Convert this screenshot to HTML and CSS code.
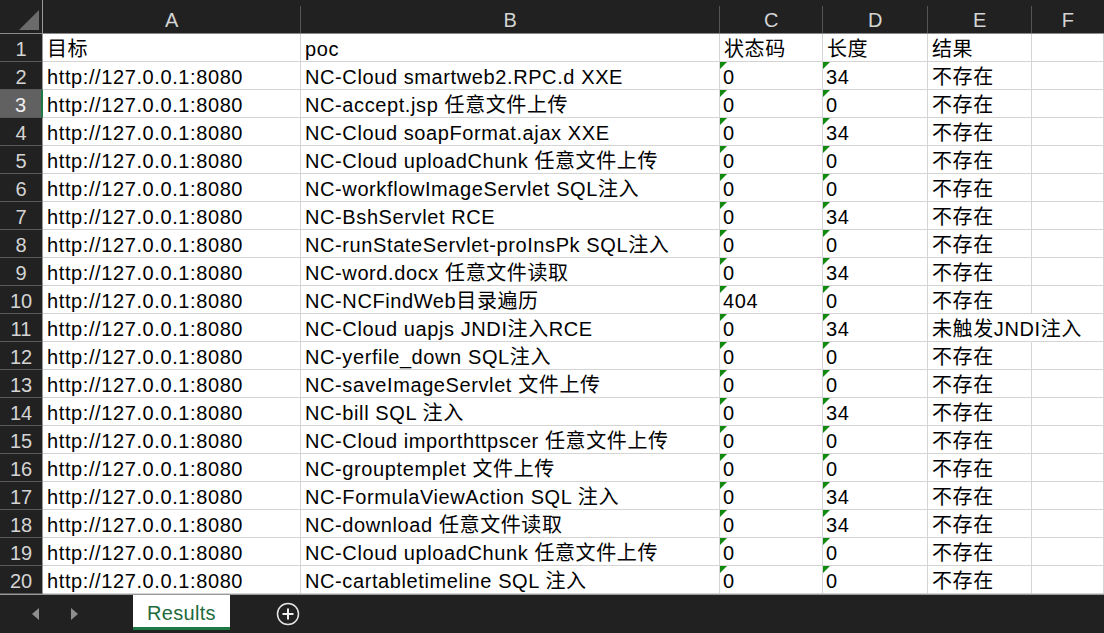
FILE: index.html
```html
<!DOCTYPE html>
<html lang="zh-CN">
<head>
<meta charset="utf-8">
<title>Results</title>
<link rel="stylesheet" href="styles.css">
</head>
<body>
<div class="app">
  <div class="sheet">
    <div class="corner"><svg class="corner-tri" width="20" height="20" viewBox="0 0 20 20"><polygon points="20,0 20,20 0,20" fill="#6b6b6b"/></svg></div>
    <div class="colh">A</div><div class="colh">B</div><div class="colh">C</div><div class="colh">D</div><div class="colh">E</div><div class="colh last">F</div>

    <div class="rowh">1</div><div class="c">目标</div><div class="c">poc</div><div class="c">状态码</div><div class="c">长度</div><div class="c">结果</div><div class="c"></div>
    <div class="rowh">2</div><div class="c">http://127.0.0.1:8080</div><div class="c">NC-Cloud smartweb2.RPC.d XXE</div><div class="c n">0</div><div class="c n">34</div><div class="c">不存在</div><div class="c"></div>
    <div class="rowh active">3</div><div class="c cur">http://127.0.0.1:8080</div><div class="c">NC-accept.jsp 任意文件上传</div><div class="c n">0</div><div class="c n">0</div><div class="c">不存在</div><div class="c"></div>
    <div class="rowh">4</div><div class="c">http://127.0.0.1:8080</div><div class="c">NC-Cloud soapFormat.ajax XXE</div><div class="c n">0</div><div class="c n">34</div><div class="c">不存在</div><div class="c"></div>
    <div class="rowh">5</div><div class="c">http://127.0.0.1:8080</div><div class="c">NC-Cloud uploadChunk 任意文件上传</div><div class="c n">0</div><div class="c n">0</div><div class="c">不存在</div><div class="c"></div>
    <div class="rowh">6</div><div class="c">http://127.0.0.1:8080</div><div class="c">NC-workflowImageServlet SQL注入</div><div class="c n">0</div><div class="c n">0</div><div class="c">不存在</div><div class="c"></div>
    <div class="rowh">7</div><div class="c">http://127.0.0.1:8080</div><div class="c">NC-BshServlet RCE</div><div class="c n">0</div><div class="c n">34</div><div class="c">不存在</div><div class="c"></div>
    <div class="rowh">8</div><div class="c">http://127.0.0.1:8080</div><div class="c">NC-runStateServlet-proInsPk SQL注入</div><div class="c n">0</div><div class="c n">0</div><div class="c">不存在</div><div class="c"></div>
    <div class="rowh">9</div><div class="c">http://127.0.0.1:8080</div><div class="c">NC-word.docx 任意文件读取</div><div class="c n">0</div><div class="c n">34</div><div class="c">不存在</div><div class="c"></div>
    <div class="rowh">10</div><div class="c">http://127.0.0.1:8080</div><div class="c">NC-NCFindWeb目录遍历</div><div class="c n">404</div><div class="c n">0</div><div class="c">不存在</div><div class="c"></div>
    <div class="rowh">11</div><div class="c">http://127.0.0.1:8080</div><div class="c">NC-Cloud uapjs JNDI注入RCE</div><div class="c n">0</div><div class="c n">34</div><div class="c spill">未触发JNDI注入</div><div class="c"></div>
    <div class="rowh">12</div><div class="c">http://127.0.0.1:8080</div><div class="c">NC-yerfile_down SQL注入</div><div class="c n">0</div><div class="c n">0</div><div class="c">不存在</div><div class="c"></div>
    <div class="rowh">13</div><div class="c">http://127.0.0.1:8080</div><div class="c">NC-saveImageServlet 文件上传</div><div class="c n">0</div><div class="c n">0</div><div class="c">不存在</div><div class="c"></div>
    <div class="rowh">14</div><div class="c">http://127.0.0.1:8080</div><div class="c">NC-bill SQL 注入</div><div class="c n">0</div><div class="c n">34</div><div class="c">不存在</div><div class="c"></div>
    <div class="rowh">15</div><div class="c">http://127.0.0.1:8080</div><div class="c">NC-Cloud importhttpscer 任意文件上传</div><div class="c n">0</div><div class="c n">0</div><div class="c">不存在</div><div class="c"></div>
    <div class="rowh">16</div><div class="c">http://127.0.0.1:8080</div><div class="c">NC-grouptemplet 文件上传</div><div class="c n">0</div><div class="c n">0</div><div class="c">不存在</div><div class="c"></div>
    <div class="rowh">17</div><div class="c">http://127.0.0.1:8080</div><div class="c">NC-FormulaViewAction SQL 注入</div><div class="c n">0</div><div class="c n">34</div><div class="c">不存在</div><div class="c"></div>
    <div class="rowh">18</div><div class="c">http://127.0.0.1:8080</div><div class="c">NC-download 任意文件读取</div><div class="c n">0</div><div class="c n">34</div><div class="c">不存在</div><div class="c"></div>
    <div class="rowh">19</div><div class="c">http://127.0.0.1:8080</div><div class="c">NC-Cloud uploadChunk 任意文件上传</div><div class="c n">0</div><div class="c n">0</div><div class="c">不存在</div><div class="c"></div>
    <div class="rowh">20</div><div class="c">http://127.0.0.1:8080</div><div class="c">NC-cartabletimeline SQL 注入</div><div class="c n">0</div><div class="c n">0</div><div class="c">不存在</div><div class="c"></div>
  </div>

  <div class="tabbar">
    <div class="navs">
      <svg class="nav" width="8" height="12" viewBox="0 0 8 12"><polygon points="7,0 7,12 0,6" fill="#8e8e8e"/></svg>
      <svg class="nav" width="8" height="12" viewBox="0 0 8 12"><polygon points="1,0 1,12 8,6" fill="#8e8e8e"/></svg>
    </div>
    <div class="tab">Results</div>
    <svg class="add" width="24" height="24" viewBox="0 0 24 24"><circle cx="12" cy="12" r="10.5" fill="none" stroke="#e6e6e6" stroke-width="1.5"/><path d="M12 6.5v11M6.5 12h11" stroke="#f0f0f0" stroke-width="2"/></svg>
  </div>
</div>
</body>
</html>
```
FILE: styles.css
```css
* { box-sizing: border-box; }
html, body { margin: 0; padding: 0; }
body {
  background: #212121;
  font-family: "Liberation Sans", "Noto Sans CJK SC", sans-serif;
  font-size: 20px;
  overflow: hidden;
}
.app {
  width: 1104px;
  height: 633px;
  display: flex;
  flex-direction: column;
}
.sheet {
  display: grid;
  grid-template-columns: 43px 258px 419px 103px 105px 104px 72px;
  grid-template-rows: 34px repeat(20, 28px);
}
.corner {
  background: #212121;
  border-right: 1px solid #9a9a9a;
  border-bottom: 1px solid #8a8a8a;
  display: flex;
  align-items: flex-start;
  justify-content: flex-end;
  padding: 10px 3px 0 0;
}
.colh {
  background: #212121;
  color: #d4d4d4;
  text-align: center;
  line-height: 26px;
  padding-top: 7px;
  letter-spacing: 0.5px;
  border-bottom: 1px solid #8a8a8a;
  position: relative;
}
.colh::after {
  content: "";
  position: absolute;
  right: 0;
  top: 6px;
  bottom: 0;
  width: 1px;
  background: #555;
}
.colh.last::after { display: none; }
.rowh {
  background: #212121;
  color: #d4d4d4;
  text-align: center;
  line-height: 27px;
  padding-top: 2px;
  overflow: hidden;
  border-right: 1px solid #9a9a9a;
  border-bottom: 1px solid #5a5a5a;
}
.rowh.active {
  background: #616161;
  color: #f0f0f0;
  border-right: 2px solid #1d7a45;
}
.c {
  background: #fff;
  color: #000;
  line-height: 27px;
  padding-top: 2px;
  padding-left: 4px;
  white-space: nowrap;
  overflow: hidden;
  letter-spacing: 0.6px;
  border-right: 1px solid #d4d4d4;
  border-bottom: 1px solid #d4d4d4;
  position: relative;
}
.c.n { padding-left: 3px; }
.c.n::before {
  content: "";
  position: absolute;
  left: 0;
  top: 0;
  width: 0;
  height: 0;
  border-top: 7px solid #128a12;
  border-right: 7px solid transparent;
}
.c.spill {
  overflow: visible;
  border-right-color: #fff;
  z-index: 1;
}
.tabbar {
  flex: 1;
  background: #212121;
  border-top: 1px solid #9a9a9a;
  display: flex;
  align-items: flex-start;
}
.navs {
  display: flex;
  align-items: center;
  gap: 30px;
  width: 133px;
  padding: 13px 0 0 32px;
}
.tab {
  width: 97px;
  height: 35px;
  background: #fff;
  color: #1d6b3c;
  text-align: center;
  line-height: 32px;
  padding-top: 2px;
  letter-spacing: 0.3px;
  border-bottom: 3px solid #1d7a45;
}
.add { margin: 7px 0 0 46px; }
```
